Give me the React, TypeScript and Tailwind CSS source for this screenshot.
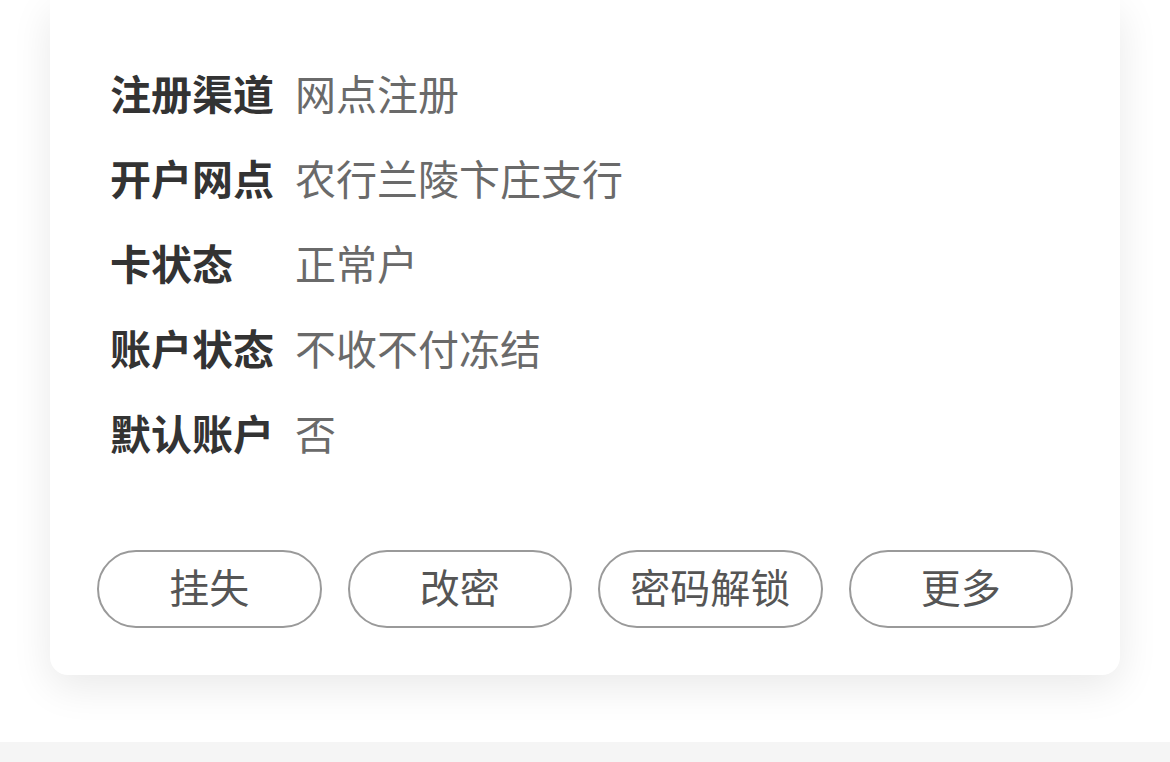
import React from "react";

const rows = [
  { label: "注册渠道", value: "网点注册" },
  { label: "开户网点", value: "农行兰陵卞庄支行" },
  { label: "卡状态", value: "正常户" },
  { label: "账户状态", value: "不收不付冻结" },
  { label: "默认账户", value: "否" },
];

const actions = ["挂失", "改密", "密码解锁", "更多"];

const App = () => {
  return (
    <div
      className="w-[1170px] h-[762px] bg-white flex flex-col overflow-hidden"
      style={{ fontFamily: '"Noto Sans CJK SC", "Noto Sans", sans-serif' }}
    >
      <div className="px-[50px] flex-1">
        <div className="bg-white rounded-b-[18px] shadow-[0_12px_40px_rgba(0,0,0,0.09)] pt-[50px] pb-[47px] px-[47px]">
          <div className="flex flex-col pl-[13px]">
            {rows.map((row) => (
              <div key={row.label} className="flex items-center h-[85px] leading-none">
                <span className="w-[185px] shrink-0 text-[41px] font-bold text-[#333333]">
                  {row.label}
                </span>
                <span className="text-[41px] text-[#6a6a6a]">{row.value}</span>
              </div>
            ))}
          </div>
          <div className="grid grid-cols-4 gap-[26px] mt-[75px]">
            {actions.map((a) => (
              <button
                key={a}
                className="h-[78px] pb-[6px] rounded-full border-[2.5px] border-[#9a9a9a] bg-white text-[40px] text-[#555555] leading-none flex items-center justify-center"
              >
                {a}
              </button>
            ))}
          </div>
        </div>
      </div>
      <div className="h-[20px] bg-[#f5f5f5]" />
    </div>
  );
};

export default App;
